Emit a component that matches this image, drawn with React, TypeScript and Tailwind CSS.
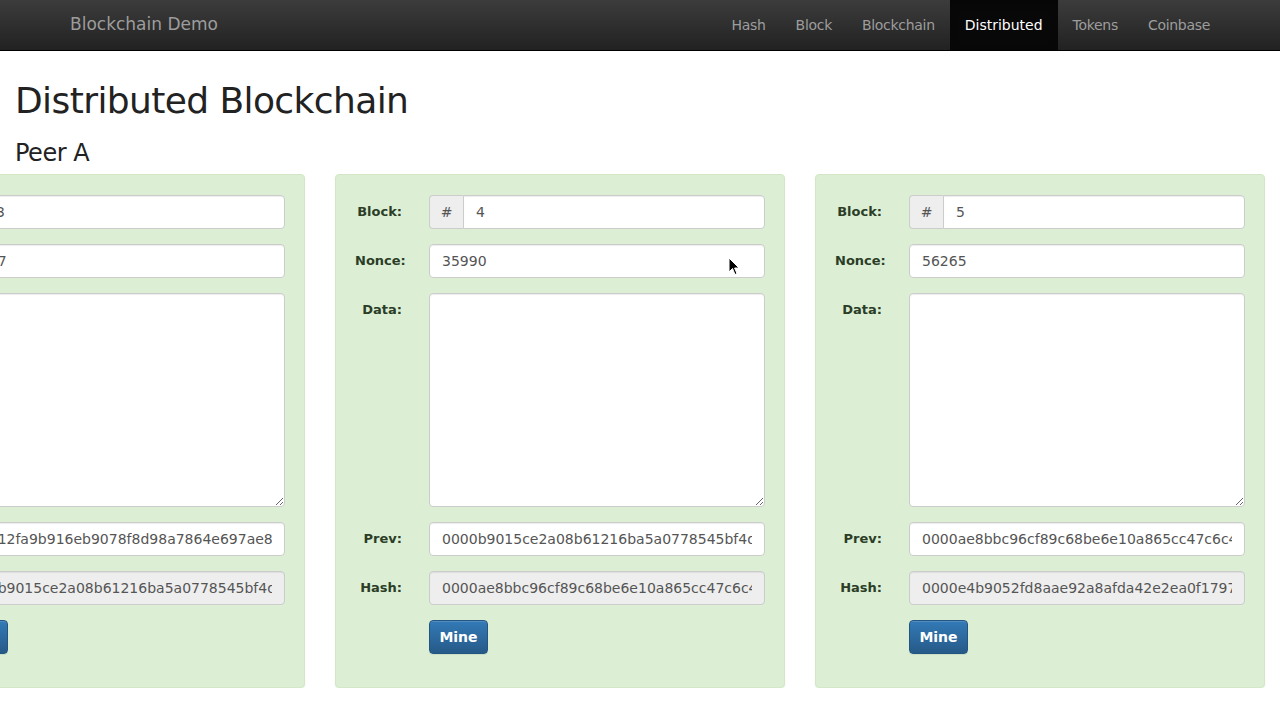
import React from "react";

type Block = {
  num: string;
  nonce: string;
  prev: string;
  hash: string;
};

const blocks: Block[] = [
  {
    num: "3",
    nonce: "25417",
    prev: "000012fa9b916eb9078f8d98a7864e697ae83ed54f5146bd84452cdafd043c19",
    hash: "0000b9015ce2a08b61216ba5a0778545bf4dd7c3d3c6f1d3a2b9e5c8a0e4f120",
  },
  {
    num: "4",
    nonce: "35990",
    prev: "0000b9015ce2a08b61216ba5a0778545bf4dd7c3d3c6f1d3a2b9e5c8a0e4f120",
    hash: "0000ae8bbc96cf89c68be6e10a865cc47c6c48a9f7b12e0d3c6a9e2b0f4d7a15",
  },
  {
    num: "5",
    nonce: "56265",
    prev: "0000ae8bbc96cf89c68be6e10a865cc47c6c48a9f7b12e0d3c6a9e2b0f4d7a15",
    hash: "0000e4b9052fd8aae92a8afda42e2ea0f179726a1c0b5e3d9f8a27c4b6e1d038",
  },
];

const links = ["Hash", "Block", "Blockchain", "Distributed", "Tokens", "Coinbase"];

const inputBase =
  "h-[34px] rounded-[4px] border border-[#cccccc] px-[12px] text-[14px] text-[#555555] shadow-[inset_0_1px_1px_rgba(0,0,0,0.075)] outline-none";

function Label({ children }: { children: React.ReactNode }) {
  return (
    <div className="w-[74px] shrink-0 pr-[27px] pt-[7px] text-right text-[13px] font-bold leading-[20px] text-[#2b3d26]">
      {children}
    </div>
  );
}

function Card({ b }: { b: Block }) {
  return (
    <div className="w-[450px] shrink-0 rounded-[4px] border border-[#d3e6c5] bg-[#dcefd5] px-[19px] pb-[33px] pt-[20px] shadow-[0_1px_2px_rgba(0,0,0,0.05)]">
      <div className="flex flex-col gap-[15px]">
        <div className="flex">
          <Label>Block:</Label>
          <div className="flex h-[34px] w-[336px]">
            <span className="flex w-[34px] shrink-0 items-center justify-center rounded-l-[4px] border border-r-0 border-[#cccccc] bg-[#eeeeee] text-[14px] text-[#555555]">
              #
            </span>
            <input readOnly value={b.num} className={`${inputBase} min-w-0 flex-1 rounded-l-none bg-white`} />
          </div>
        </div>
        <div className="flex">
          <Label>Nonce:</Label>
          <input readOnly value={b.nonce} className={`${inputBase} w-[336px] bg-white`} />
        </div>
        <div className="flex">
          <Label>Data:</Label>
          <textarea
            readOnly
            className="h-[214px] w-[336px] rounded-[4px] border border-[#cccccc] bg-white px-[12px] py-[6px] text-[14px] shadow-[inset_0_1px_1px_rgba(0,0,0,0.075)] outline-none"
          />
        </div>
        <div className="flex">
          <Label>Prev:</Label>
          <input readOnly value={b.prev} className={`${inputBase} w-[336px] bg-white`} />
        </div>
        <div className="flex">
          <Label>Hash:</Label>
          <input readOnly value={b.hash} className={`${inputBase} w-[336px] bg-[#eeeeee]`} />
        </div>
        <div className="flex">
          <div className="w-[74px] shrink-0" />
          <button className="h-[34px] w-[59px] rounded-[4px] border border-[#245580] bg-gradient-to-b from-[#337ab7] to-[#265a88] text-[14px] font-bold text-white shadow-[inset_0_1px_0_rgba(255,255,255,0.15),0_1px_1px_rgba(0,0,0,0.075)]">
            Mine
          </button>
        </div>
      </div>
    </div>
  );
}

export default function App() {
  return (
    <div className="relative h-[720px] w-[1280px] overflow-hidden bg-white font-['DejaVu_Sans',sans-serif] text-[#333333]">
      <nav className="h-[51px] border-b border-black bg-gradient-to-b from-[#3c3c3c] to-[#222222]">
        <div className="mx-auto flex h-[50px] w-[1170px] items-center justify-between">
          <span className="pl-[15px] text-[17px] text-[#9d9d9d]">Blockchain Demo</span>
          <ul className="flex h-[50px]">
            {links.map((l) =>
              l === "Distributed" ? (
                <li
                  key={l}
                  className="bg-[#080808] px-[15px] text-[14px] leading-[50px] text-white shadow-[inset_0_3px_9px_rgba(0,0,0,0.25)]"
                >
                  {l}
                </li>
              ) : (
                <li key={l} className="px-[15px] text-[14px] leading-[50px] tracking-[-0.3px] text-[#9d9d9d]">
                  {l}
                </li>
              )
            )}
          </ul>
        </div>
      </nav>

      <div className="px-[15px]">
        <h1 className="mt-[30px] text-[36px] leading-[40px] tracking-[-0.6px] text-[#222222]">
          Distributed Blockchain
        </h1>
        <h3 className="mt-[18px] text-[24px] leading-[28px] tracking-[-0.5px] text-[#222222]">Peer A</h3>
      </div>

      <div className="mt-[7px] overflow-hidden">
        <div className="ml-[-145px] flex gap-[30px]">
          {blocks.map((b) => (
            <Card key={b.num} b={b} />
          ))}
        </div>
      </div>

      {/* mouse pointer */}
      <svg className="absolute left-[728px] top-[257px]" width="12" height="19" viewBox="0 0 12 19">
        <path d="M1 1 L1 15 L4.5 11.5 L7 17.5 L9 16.6 L6.6 11 L11 11 Z" fill="#000" stroke="#fff" strokeWidth="1" />
      </svg>
    </div>
  );
}
